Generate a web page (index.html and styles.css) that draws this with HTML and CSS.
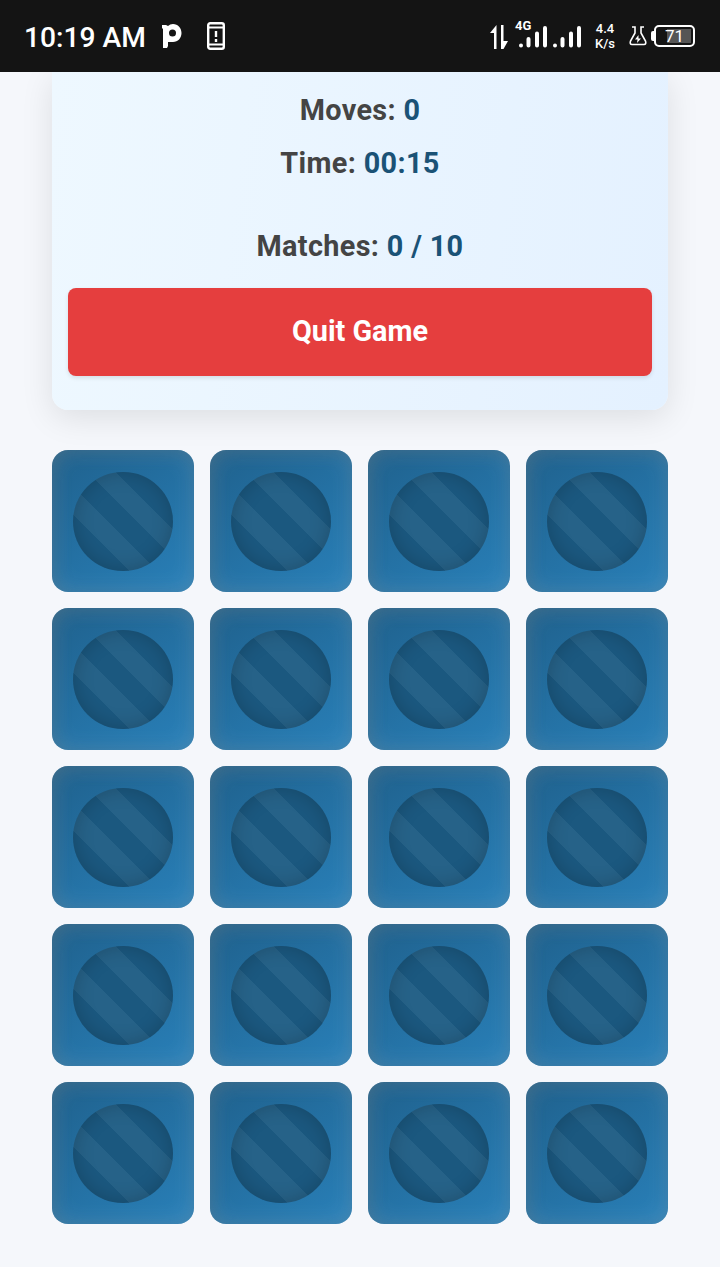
FILE: index.html
```html
<!DOCTYPE html>
<html lang="en">
<head>
<meta charset="utf-8">
<title>Memory Game</title>
<link rel="stylesheet" href="styles.css">
</head>
<body>
<header class="status">
  <span class="clock">10:19 AM</span>
  <svg class="app" width="20" height="25" viewBox="0 0 20 25"><path fill="#fff" fill-rule="evenodd" d="M0 1h4l2 1q2-2 5-2c5 0 8.500 4 8.500 9s-3.500 9-8.500 9H6v4l-1 2H1V5L0 4zM10.500 5.500a3.500 3.500 0 1 0 0 7a3.500 3.500 0 0 0 0-7z"/></svg>
  <svg class="phone" width="18" height="28" viewBox="0 0 18 28" fill="none" stroke="#fff"><rect x="1.200" y="1.200" width="15.600" height="25.600" rx="2" stroke-width="2.400"/><path d="M2 5.500h14M2 22.500h14" stroke-width="2"/><path d="M9 9v6M9 17v3" stroke-width="2.4"/></svg>
  <span class="spacer"></span>
  <svg class="arrows" width="18" height="25" viewBox="0 0 18 25" fill="#fff"><path d="M6.500 0v24H4V8H0zM11 0h2.500v16h4.500L13.500 24H11z"/></svg>
  <div class="signal">
    <svg width="64" height="24" viewBox="0 0 64 24" fill="none" stroke="#fff" stroke-width="4" stroke-linecap="round"><path d="M3 21.500v.1M10.500 15v6.500M19 9.500v12M27 4v17.500M37 21.500v.1M44.500 15v6.500M53 9.500v12M61 4v17.500"/></svg>
    <span class="network">4G</span>
  </div>
  <div class="speed"><span>4.4</span><span>K/s</span></div>
  <svg class="flask" width="18" height="20" viewBox="0 0 18 20"><path d="M3 1h3v6L1.500 15Q.5 18.500 3 18.500h12q2.500 0 1.500-3.500L12 7V1h3" fill="none" stroke="#fff" stroke-width="1.600"/><path d="M9.500 9L6 13.500h2.500L8 17l4-4.500H9.500z" fill="#fff"/></svg>
  <div class="battery"><span class="tip"></span><span class="cell"><span class="level"></span><span class="percent">71</span></span></div>
</header>
<main class="game">
  <section class="panel">
    <p class="stat moves">Moves: <b>0</b></p>
    <p class="stat time">Time: <b>00:15</b></p>
    <p class="stat matches">Matches: <b>0 / 10</b></p>
    <button class="quit">Quit Game</button>
  </section>
  <section class="board">
    <div class="card"><i></i></div><div class="card"><i></i></div><div class="card"><i></i></div><div class="card"><i></i></div>
    <div class="card"><i></i></div><div class="card"><i></i></div><div class="card"><i></i></div><div class="card"><i></i></div>
    <div class="card"><i></i></div><div class="card"><i></i></div><div class="card"><i></i></div><div class="card"><i></i></div>
    <div class="card"><i></i></div><div class="card"><i></i></div><div class="card"><i></i></div><div class="card"><i></i></div>
    <div class="card"><i></i></div><div class="card"><i></i></div><div class="card"><i></i></div><div class="card"><i></i></div>
  </section>
</main>
</body>
</html>
```
FILE: styles.css
```css
* { box-sizing: border-box; }
body { margin: 0; height: 1267px; overflow: hidden; background: #f5f7fb; font-family: Roboto, sans-serif; }
svg { display: block; flex: none; }
.status { position: relative; z-index: 1; display: flex; align-items: center; height: 72px; padding: 0 25px 0 24px; background: #141414; color: #fff; }
.clock { width: 122px; margin-top: 3px; font-size: 28.2px; font-weight: 500; line-height: 34px; white-space: nowrap; }
.app { margin: 0 0 0 16px; }
.phone { margin-left: 25px; }
.spacer { flex: 1; }
.arrows { margin: 2px 10px 0 0; }
.signal { position: relative; width: 64px; height: 24px; margin-top: 0; }
.network { position: absolute; left: -3px; top: -5px; font-size: 13px; font-weight: 700; line-height: 14px; }
.speed { display: flex; flex-direction: column; align-items: center; width: 20px; margin: 0 14px 0 13px; font-size: 13px; font-weight: 500; line-height: 15px; white-space: nowrap; }
.battery { display: flex; align-items: center; margin-left: 4px; }
.tip { width: 3px; height: 10px; border-radius: 2px 0 0 2px; background: #fff; }
.cell { position: relative; width: 41px; height: 22px; border: 2px solid #fff; border-radius: 5px; text-align: center; }
.level { position: absolute; right: 2px; top: 2px; width: 24px; height: 14px; background: #555; }
.percent { position: relative; display: block; font-size: 17px; line-height: 19px; }
.game { padding: 0 52px; }
.panel { height: 338px; padding: 18px 16px 34px; display: flex; flex-direction: column; border-radius: 0 0 16px 16px; background: linear-gradient(97deg, #eef8ff, #e4f1ff); box-shadow: 0 8px 32px rgba(0,0,0,.1); }
.stat { margin: 0; color: #444; font-size: 28.8px; font-weight: 700; line-height: 40px; letter-spacing: .35px; text-align: center; }
.stat b { font-weight: 700; color: #1a5276; }
.time { margin-top: 13px; }
.matches { margin-top: 43px; }
.quit { height: 88px; margin-top: auto; padding: 0 0 2px; border: 0; border-radius: 8px; background: #e53e3e; color: #fff; font: 700 28.8px Roboto, sans-serif; box-shadow: 0 2px 4px rgba(0,0,0,.1); }
.board { display: grid; grid-template-columns: repeat(4, 142px); grid-auto-rows: 142px; gap: 16px; margin-top: 40px; }
.card { display: grid; place-items: center; padding-top: 1px; border-radius: 16px; background: linear-gradient(145deg, #1f618d, #2980b9); box-shadow: inset 0 0 24px rgba(255,255,255,.14), inset 3px 3px 16px rgba(60,80,90,.3); }
.card i { width: 99.4px; height: 99.4px; border-radius: 50%; background: repeating-linear-gradient(45deg, #266288 0 20px, #1b587f 20px 40px); box-shadow: inset 0 0 20px rgba(0,0,0,.2); }
```
